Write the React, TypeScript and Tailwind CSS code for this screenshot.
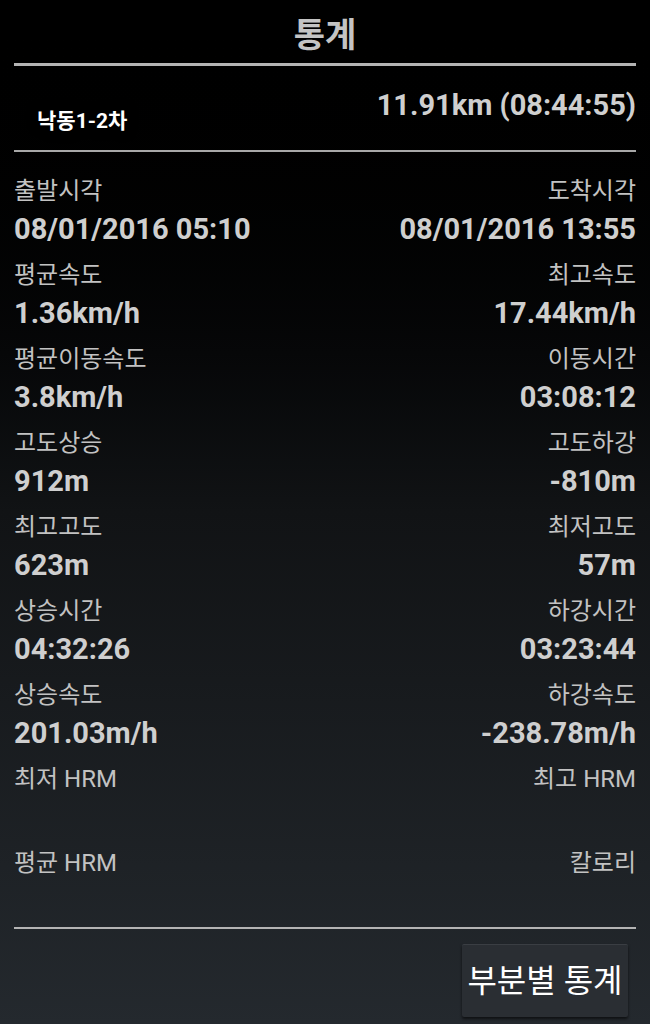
import React from "react";

const stats: [string, string, string, string][] = [
  ["출발시각", "08/01/2016 05:10", "도착시각", "08/01/2016 13:55"],
  ["평균속도", "1.36km/h", "최고속도", "17.44km/h"],
  ["평균이동속도", "3.8km/h", "이동시간", "03:08:12"],
  ["고도상승", "912m", "고도하강", "-810m"],
  ["최고고도", "623m", "최저고도", "57m"],
  ["상승시간", "04:32:26", "하강시간", "03:23:44"],
  ["상승속도", "201.03m/h", "하강속도", "-238.78m/h"],
  ["최저 HRM", "", "최고 HRM", ""],
  ["평균 HRM", "", "칼로리", ""],
];

const font = { fontFamily: "Roboto, 'Noto Sans CJK KR', sans-serif" };

const Stat = ({ label, value, right }: { label: string; value: string; right?: boolean }) => (
  <div className={right ? "flex flex-col items-end" : "flex flex-col items-start"}>
    <p className="text-[24px] leading-[31px] text-[#c2c2c2]">{label}</p>
    <p className="h-[42px] text-[29px] leading-[44px] font-bold text-[#cfcfcf]">{value}</p>
  </div>
);

export default function App() {
  return (
    <div
      className="flex h-[1024px] w-[650px] flex-col bg-gradient-to-b from-black via-[#111315] to-[#24292e] px-[14px]"
      style={font}
    >
      <h1 className="pt-[15px] pb-[8px] text-center text-[34px] leading-[40px] font-bold text-[#c4c4c4]">통계</h1>
      <div className="h-[3px] bg-[#b4b4b4]" />

      <div className="flex h-[84px] items-center justify-between">
        <span className="ml-[23px] mt-[28px] text-[21px] font-bold text-white [text-shadow:0_0_6px_#000,0_0_12px_#000]">
          낙동1-2차
        </span>
        <span className="mb-[4px] text-[29px] font-bold text-[#cfcfcf]">11.91km (08:44:55)</span>
      </div>
      <div className="h-[2px] bg-[#a8a8a8]" />

      <div className="flex flex-col pt-[24px]">
        {stats.map(([l1, v1, l2, v2]) => (
          <div key={l1} className="flex h-[84px] justify-between">
            <Stat label={l1} value={v1} />
            <Stat label={l2} value={v2} right />
          </div>
        ))}
      </div>

      <div className="-mt-[5px] h-[2px] bg-[#b4b4b4]" />
      <div className="flex justify-end pt-[15px] pr-[8px]">
        <button className="h-[73px] w-[166px] rounded-[2px] border-t border-[#3a3e43] bg-[#2a2e33] text-[32px] text-white shadow-[0_2px_3px_rgba(0,0,0,0.6)]">
          부분별 통계
        </button>
      </div>
    </div>
  );
}
